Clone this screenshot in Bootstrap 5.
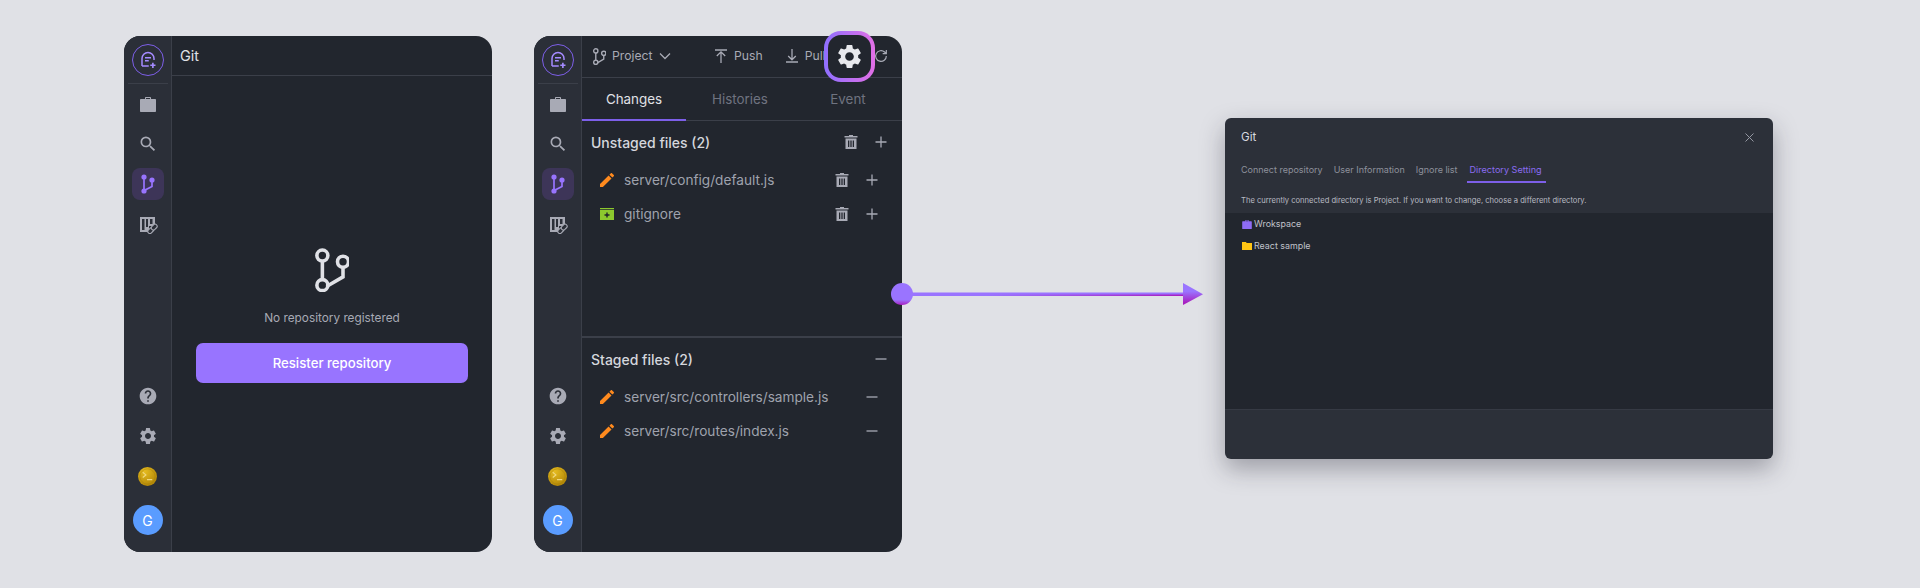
<!DOCTYPE html>
<html lang="en">
<head>
<meta charset="utf-8">
<title>Git panels</title>
<link href="https://cdn.jsdelivr.net/npm/bootstrap@5.3.0/dist/css/bootstrap.min.css" rel="stylesheet">
<style>
html,body{height:588px;overflow:hidden}
body{background:#e0e1e6;font-family:"Inter","Liberation Sans",sans-serif;color:#e0e1e6}
.stage{height:588px;padding:36px 0 0 124px;align-items:flex-start}
.app-panel{width:368px;height:516px;background:#22262e;border-radius:16px;overflow:hidden;flex:none}
.panel-gap{margin-left:42px}
.rail{width:48px;flex:none;background:#2b2f38;border-right:1px solid #3b3f49;padding-top:8px;padding-bottom:17px;align-items:center}
.rail-logo{width:32px;height:32px;border-radius:50%;border:1px solid #7d5fe8;color:#a58bff;display:flex;align-items:center;justify-content:center;flex:none}
.rail-rule{width:40px;height:1px;background:#3b3f49;margin:7px 0 4px;flex:none}
.rail-btn{width:32px;height:32px;border-radius:8px;display:flex;align-items:center;justify-content:center;color:#a8aab5;margin-bottom:8px;flex:none}
.rail-btn.is-on{background:#3d3558;color:#9874ff}
.avatar-g{width:30px;height:30px;border-radius:50%;background:#5a9cff;color:#fff;font-size:14px;display:flex;align-items:center;justify-content:center;margin-top:5px;flex:none}
.pane{min-width:0}
.pane-title{height:40px;border-bottom:1px solid #3b3f49;padding-left:8px;font-size:14.5px;line-height:1;padding-top:2px}
.empty-ico{margin-top:172px;color:#e0e1e6}
.empty-msg{font-size:11.8px;color:#a8aab5;margin-top:17px;line-height:18px}
.reg-btn{background:#9874ff;border:0;color:#fff;height:40px;margin:16px 24px 0;width:272px;font-size:13.2px;font-weight:500;border-radius:7px;padding:1px 0 0}
.reg-btn:hover{background:#9874ff;color:#fff}
.git-top{height:42px;border-bottom:1px solid #3b3f49;color:#a8aab5;font-size:12.2px;flex:none;white-space:nowrap}
.git-top .proj{margin-left:11px;width:122px;gap:6px;flex:none}
.git-top .proj .chev{margin-left:1px}
.git-top .act{gap:7px}
.git-top .act-pull{margin-left:23px;width:75px;overflow:hidden;flex:none}
.git-tabs{height:43px;border-bottom:1px solid #3b3f49;flex:none}
.git-tab{flex:1 1 0;text-align:center;font-size:13.4px;color:#6f7380;line-height:43px;height:43px;border-bottom:2px solid transparent}
.git-tab.is-on{flex:0 0 104px;color:#e0e1e6;border-bottom-color:#7d5fe8}
.chg-top{height:215px;flex:none;padding-top:6px}
.chg-top .sec-head{margin-bottom:6px}
.chg-rule{height:2px;background:#3b3f49;flex:none}
.chg-bot{padding-top:6px}
.chg-bot .sec-head{margin-bottom:6px}
.sec-head{height:30px;padding:0 14px 0 9px;font-size:14px;font-weight:500;color:#d5d7dd}
.file-row{height:34px;padding:0 23px 0 18px;font-size:13.65px;color:#9fa2ad}
.file-row .file-ico{margin-right:10px;flex:none}
.ico-orange{color:#ff8a1e}
.ico-violet{color:#8f6cf5}
.mini-acts{gap:16px;color:#a8aab5}
.mini-acts svg{display:block}
.hl-box{position:absolute;left:290px;top:-5px;width:51px;height:51px;border-radius:17px;border:4px solid transparent;background:linear-gradient(#22262e,#22262e) padding-box,linear-gradient(90deg,#8f6fff,#e26fe6) border-box;display:flex;align-items:center;justify-content:center;color:#e8e9ed}
.refresh-ico{position:absolute;left:339px;top:12px;color:#a8aab5}
.panel-wrap{flex:none}
.link-lane{width:323px;height:516px;flex:none}
.link-art{position:absolute;left:-12px;top:244px}
.dlg{width:548px;height:341px;margin-top:82px;background:#2c3039;border-radius:6px;box-shadow:0 10px 24px rgba(30,30,45,.34);overflow:hidden;flex:none}
.dlg-head{height:95px;flex:none;padding:0 16px}
.dlg-title{font-size:11.6px;height:38px;color:#d8dae0;align-items:center;padding-top:1px}
.dlg-close{margin-right:3px}
.dlg-tabs{height:28px;font-size:9px;color:#8e919c}
.dlg-tab{line-height:27px;height:27px;border-bottom:2px solid transparent;padding:0 3px;margin-right:5px;white-space:nowrap}
.dlg-tab.is-on{color:#8a6cf0;border-bottom-color:#7d5fe8;font-size:9.1px;padding-right:4px;margin-left:1px}
.dlg-desc{font-size:7.6px;color:#b9bbc3;height:29px;line-height:22px;white-space:nowrap;padding-top:6px}
.dlg-body{height:197px;background:#22262e;border-bottom:1px solid #363a44;flex:none;padding:0 17px}
.dir-row{height:22px;font-size:8.9px;color:#c0c2ca;gap:2px}
</style>
</head>
<body>
<svg width="0" height="0" class="position-absolute">
  <defs>
    <radialGradient id="coinG" cx=".35" cy=".25" r=".9"><stop offset="0" stop-color="#e6bc20"/><stop offset="1" stop-color="#a97e04"/></radialGradient>
  </defs>
  <symbol id="i-logo" viewBox="0 0 24 24"><path d="M4 20V10a8 8 0 0 1 16 0v2M4 20h9" fill="none" stroke="currentColor" stroke-width="2"/><path d="M8 9h8M8 13h5" stroke="currentColor" stroke-width="1.800"/><path d="M18.500 15.500v7M15 19h7" stroke="currentColor" stroke-width="2.200"/></symbol>
  <symbol id="i-work" viewBox="0 0 16 15"><path fill="currentColor" d="M5 2V1c0-.6.4-1 1-1h4c.6 0 1 .4 1 1v1h4c.6 0 1 .4 1 1v11c0 .6-.4 1-1 1H1c-.6 0-1-.4-1-1V3c0-.6.4-1 1-1zm1 0h4V1H6z"/></symbol>
  <symbol id="i-search" viewBox="0 0 24 24"><path fill="currentColor" d="M15.500 14h-.79l-.28-.27A6.471 6.471 0 0 0 16 9.500 6.500 6.500 0 1 0 9.500 16c1.610 0 3.090-.59 4.230-1.570l.27.28v.79l5 4.990L20.490 19l-4.990-5zm-6 0C7.010 14 5 11.990 5 9.500S7.010 5 9.500 5 14 7.010 14 9.500 11.990 14 9.500 14z"/></symbol>
  <symbol id="i-gitfill" viewBox="0 0 14 20"><path d="M3 3v13.500L11 12.500V6" fill="none" stroke="currentColor" stroke-width="1.700"/><circle cx="3" cy="3" r="2.600" fill="currentColor"/><circle cx="11" cy="6" r="2.600" fill="currentColor"/><circle cx="3" cy="17" r="2.600" fill="currentColor"/></symbol>
  <symbol id="i-gitline" viewBox="0 0 24 32"><path d="M5 9v14M20 14v7L8 28" fill="none" stroke="currentColor" stroke-width="2.600"/><circle cx="5" cy="5.500" r="4" fill="none" stroke="currentColor" stroke-width="2.600"/><circle cx="20" cy="10" r="4" fill="none" stroke="currentColor" stroke-width="2.600"/><circle cx="5" cy="27" r="4" fill="none" stroke="currentColor" stroke-width="2.600"/></symbol>
  <symbol id="i-board" viewBox="-2 -3 20 20"><path fill="currentColor" fill-rule="evenodd" d="M0 0h15v9H9v6H0zM2 2v11h2.500V2zm4 0v8h2V2zm4 0v5h2.500V2z"/><g fill="#2b2f38" stroke="currentColor" stroke-width="1.100"><rect x="7.500" y="11.500" width="6.500" height="4.200" rx="2.100" transform="rotate(-45 10.700 13.600)"/><rect x="11" y="8" width="6.500" height="4.200" rx="2.100" transform="rotate(-45 14.200 10.100)"/></g></symbol>
  <symbol id="i-help" viewBox="0 0 24 24"><path fill="currentColor" d="M12 2C6.480 2 2 6.480 2 12s4.480 10 10 10 10-4.480 10-10S17.520 2 12 2zm1 17h-2v-2h2v2zm2.070-7.750l-.9.92C13.450 12.900 13 13.500 13 15h-2v-.5c0-1.100.45-2.100 1.170-2.830l1.240-1.260c.37-.36.59-.86.59-1.410 0-1.100-.9-2-2-2s-2 .9-2 2H8c0-2.210 1.790-4 4-4s4 1.790 4 4c0 .88-.36 1.680-.93 2.250z"/></symbol>
  <symbol id="i-gear" viewBox="0 0 24 24"><path fill="currentColor" d="M19.140 12.940c.04-.3.06-.61.06-.94 0-.32-.02-.64-.07-.94l2.030-1.580a.49.49 0 0 0 .12-.61l-1.920-3.320a.488.488 0 0 0-.59-.22l-2.390.96c-.5-.38-1.030-.7-1.620-.94l-.36-2.540a.484.484 0 0 0-.48-.41h-3.840c-.24 0-.43.17-.47.41l-.36 2.540c-.59.24-1.130.57-1.620.94l-2.390-.96c-.22-.08-.47 0-.59.22L2.740 8.870c-.12.21-.08.47.12.61l2.030 1.580c-.05.3-.09.63-.09.94s.02.64.07.94l-2.030 1.580a.49.49 0 0 0-.12.61l1.920 3.320c.12.22.37.29.59.22l2.390-.96c.5.38 1.030.7 1.620.94l.36 2.540c.05.24.24.41.48.41h3.840c.24 0 .44-.17.47-.41l.36-2.540c.59-.24 1.130-.56 1.620-.94l2.390.96c.22.08.47 0 .59-.22l1.920-3.320c.12-.22.07-.47-.12-.61l-2.010-1.580zM12 15.600c-1.980 0-3.600-1.620-3.600-3.600s1.620-3.600 3.600-3.600 3.600 1.620 3.600 3.600-1.620 3.600-3.600 3.600z"/></symbol>
  <symbol id="i-edit" viewBox="3 3 18 18"><path fill="currentColor" d="M3 17.250V21h3.750L17.810 9.940l-3.750-3.750L3 17.250zM20.710 7.040a.996.996 0 0 0 0-1.410l-2.340-2.340a.996.996 0 0 0-1.410 0l-1.830 1.830 3.750 3.750 1.830-1.830z"/></symbol>
  <symbol id="i-trash" viewBox="0 0 14 14"><path fill="currentColor" d="M5 0h4v1h4.500v1.500H.5V1H5zM1.500 3.500h11V14h-11zM4 5.500v6.500h1.300V5.500zm2.350 0v6.500h1.300V5.500zm2.350 0v6.500H10V5.500z"/></symbol>
  <symbol id="i-plus" viewBox="0 0 14 14"><path d="M7 1.500v11M1.500 7h11" stroke="currentColor" stroke-width="1.300" fill="none"/></symbol>
  <symbol id="i-minus" viewBox="0 0 14 14"><path d="M1.500 7h11" stroke="currentColor" stroke-width="1.300" fill="none"/></symbol>
  <symbol id="i-archive" viewBox="0 0 14 14"><path fill="#8cc82e" d="M0 1h14v1.200H0zM0 3h14v10H0z"/><path d="M7 5.500v5M4.500 8h5" stroke="#20242b" stroke-width="1.400"/></symbol>
  <symbol id="i-coin" viewBox="0 0 18 18"><circle cx="9" cy="9" r="9" fill="url(#coinG)"/><circle cx="9" cy="9" r="7.200" fill="none" stroke="#9a7306" stroke-opacity=".5" stroke-width=".6"/><path d="M4.500 5l3 2.500-3 2.500M8.500 12h5" stroke="#f0d880" stroke-width="1.100" fill="none"/></symbol>
  <symbol id="i-folder" viewBox="0 0 10 10"><path fill="#ffc414" d="M0 1h3.800l1 1H10v7H0z"/></symbol>
</svg>

<main class="stage d-flex">
  <section class="app-panel d-flex">
    <nav class="rail d-flex flex-column">
      <div class="rail-logo"><svg width="18" height="18"><use href="#i-logo"/></svg></div>
      <div class="rail-rule"></div>
      <div class="rail-btn"><svg width="16" height="15"><use href="#i-work"/></svg></div>
      <div class="rail-btn"><svg width="20" height="20"><use href="#i-search"/></svg></div>
      <div class="rail-btn is-on"><svg width="14" height="20"><use href="#i-gitfill"/></svg></div>
      <div class="rail-btn"><svg width="20" height="20"><use href="#i-board"/></svg></div>
      <div class="rail-btn mt-auto"><svg width="20" height="20"><use href="#i-help"/></svg></div>
      <div class="rail-btn"><svg width="20" height="20"><use href="#i-gear"/></svg></div>
      <div class="rail-btn"><svg width="19" height="19"><use href="#i-coin"/></svg></div>
      <div class="avatar-g">G</div>
    </nav>
    <div class="pane flex-grow-1 d-flex flex-column">
      <div class="pane-title d-flex align-items-center">Git</div>
      <div class="d-flex flex-column align-items-center">
        <svg class="empty-ico" width="34" height="44"><use href="#i-gitline"/></svg>
        <div class="empty-msg">No repository registered</div>
        <button class="btn reg-btn" type="button">Resister repository</button>
      </div>
    </div>
  </section>

  <section class="panel-wrap panel-gap position-relative">
    <div class="app-panel d-flex">
      <nav class="rail d-flex flex-column">
        <div class="rail-logo"><svg width="18" height="18"><use href="#i-logo"/></svg></div>
        <div class="rail-rule"></div>
        <div class="rail-btn"><svg width="16" height="15"><use href="#i-work"/></svg></div>
        <div class="rail-btn"><svg width="20" height="20"><use href="#i-search"/></svg></div>
        <div class="rail-btn is-on"><svg width="14" height="20"><use href="#i-gitfill"/></svg></div>
        <div class="rail-btn"><svg width="20" height="20"><use href="#i-board"/></svg></div>
        <div class="rail-btn mt-auto"><svg width="20" height="20"><use href="#i-help"/></svg></div>
        <div class="rail-btn"><svg width="20" height="20"><use href="#i-gear"/></svg></div>
        <div class="rail-btn"><svg width="19" height="19"><use href="#i-coin"/></svg></div>
        <div class="avatar-g">G</div>
      </nav>
      <div class="pane flex-grow-1 d-flex flex-column">
        <div class="git-top d-flex align-items-center">
          <div class="proj d-flex align-items-center">
            <svg width="13" height="17"><use href="#i-gitline"/></svg>
            <span>Project</span>
            <svg class="chev" width="12" height="12" viewBox="0 0 12 12"><path d="M1 3.500l5 5 5-5" fill="none" stroke="currentColor" stroke-width="1.300"/></svg>
          </div>
          <div class="act d-flex align-items-center">
            <svg width="12" height="14" viewBox="0 0 12 14"><path d="M0 1h12M6 14V3M1.800 7L6 2.800 10.200 7" fill="none" stroke="currentColor" stroke-width="1.300"/></svg>
            <span>Push</span>
          </div>
          <div class="act act-pull d-flex align-items-center">
            <svg width="12" height="14" viewBox="0 0 12 14"><path d="M0 13h12M6 0v10.500M2.200 7L6 10.800 9.800 7" fill="none" stroke="currentColor" stroke-width="1.300"/></svg>
            <span>Pull</span>
          </div>
        </div>
        <div class="git-tabs d-flex">
          <div class="git-tab is-on">Changes</div>
          <div class="git-tab">Histories</div>
          <div class="git-tab">Event</div>
        </div>
        <div class="chg-top">
          <div class="sec-head d-flex align-items-center justify-content-between"><span>Unstaged files (2)</span>
            <div class="mini-acts d-flex"><svg width="14" height="14"><use href="#i-trash"/></svg><svg width="14" height="14"><use href="#i-plus"/></svg></div></div>
          <div class="file-row d-flex align-items-center"><svg class="file-ico ico-orange" width="14" height="14"><use href="#i-edit"/></svg><span class="flex-grow-1">server/config/default.js</span>
            <div class="mini-acts d-flex"><svg width="14" height="14"><use href="#i-trash"/></svg><svg width="14" height="14"><use href="#i-plus"/></svg></div></div>
          <div class="file-row d-flex align-items-center"><svg class="file-ico" width="14" height="14"><use href="#i-archive"/></svg><span class="flex-grow-1">gitignore</span>
            <div class="mini-acts d-flex"><svg width="14" height="14"><use href="#i-trash"/></svg><svg width="14" height="14"><use href="#i-plus"/></svg></div></div>
        </div>
        <div class="chg-rule"></div>
        <div class="chg-bot">
          <div class="sec-head d-flex align-items-center justify-content-between"><span>Staged files (2)</span>
            <div class="mini-acts d-flex"><svg width="14" height="14"><use href="#i-minus"/></svg></div></div>
          <div class="file-row d-flex align-items-center"><svg class="file-ico ico-orange" width="14" height="14"><use href="#i-edit"/></svg><span class="flex-grow-1">server/src/controllers/sample.js</span>
            <div class="mini-acts d-flex"><svg width="14" height="14"><use href="#i-minus"/></svg></div></div>
          <div class="file-row d-flex align-items-center"><svg class="file-ico ico-orange" width="14" height="14"><use href="#i-edit"/></svg><span class="flex-grow-1">server/src/routes/index.js</span>
            <div class="mini-acts d-flex"><svg width="14" height="14"><use href="#i-minus"/></svg></div></div>
        </div>
      </div>
    </div>
    <svg class="refresh-ico" width="16" height="16" viewBox="0 0 24 24"><path d="M20 12a8 8 0 1 1-2.600-5.900L20 8.500M20 3v5.500h-5.500" fill="none" stroke="currentColor" stroke-width="1.800"/></svg>
    <div class="hl-box"><svg width="29" height="29"><use href="#i-gear"/></svg></div>
  </section>

  <div class="link-lane position-relative">
    <svg class="link-art" width="320" height="28" viewBox="0 0 320 28">
      <defs>
        <linearGradient id="vgA" x1="0" y1="0" x2="0" y2="1"><stop offset=".76" stop-color="#9a74ff"/><stop offset="1" stop-color="#a81fc0"/></linearGradient>
        <linearGradient id="vgB" x1="0" y1="0" x2="0" y2="1"><stop offset=".38" stop-color="#9a74ff"/><stop offset=".9" stop-color="#a81fc0"/></linearGradient>
        <linearGradient id="vgC" x1="0" y1="0" x2="1" y2="0"><stop offset=".3" stop-color="#a81fc0" stop-opacity="0"/><stop offset="1" stop-color="#a81fc0"/></linearGradient>
      </defs>
      <path d="M12 12.500h282v3.500H12z" fill="#9a74ff"/>
      <path d="M12 14.500h282V16H12z" fill="url(#vgC)"/>
      <path d="M293 3l20 11.200L293 25z" fill="url(#vgB)"/>
      <circle cx="12" cy="14" r="11" fill="url(#vgA)"/>
    </svg>
  </div>

  <section class="dlg d-flex flex-column">
    <div class="dlg-head d-flex flex-column">
      <div class="dlg-title d-flex justify-content-between"><span>Git</span>
        <svg class="dlg-close" width="9" height="9" viewBox="0 0 9 9"><path d="M.5.500l8 8M8.500.500l-8 8" stroke="#9497a2" stroke-width="1"/></svg></div>
      <div class="dlg-tabs d-flex">
        <div class="dlg-tab ps-0">Connect repository</div>
        <div class="dlg-tab">User Information</div>
        <div class="dlg-tab">Ignore list</div>
        <div class="dlg-tab is-on">Directory Setting</div>
      </div>
      <div class="dlg-desc">The currently connected directory is Project. If you want to change, choose a different directory.</div>
    </div>
    <div class="dlg-body">
      <div class="dir-row d-flex align-items-center"><svg class="ico-violet" width="10" height="9"><use href="#i-work"/></svg><span>Wrokspace</span></div>
      <div class="dir-row d-flex align-items-center"><svg width="10" height="10"><use href="#i-folder"/></svg><span>React sample</span></div>
    </div>
  </section>
</main>
</body>
</html>
